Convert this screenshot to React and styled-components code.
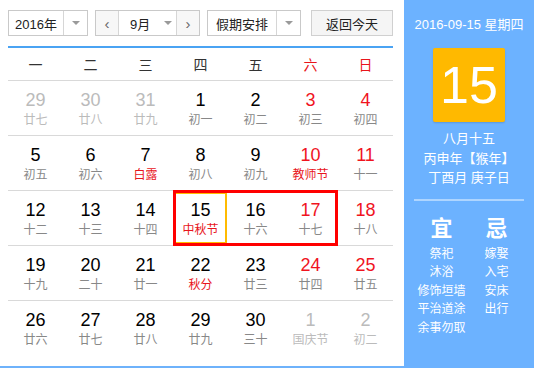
import React from "react";
import styled, { createGlobalStyle } from "styled-components";

const GlobalStyle = createGlobalStyle`
  body {
    margin: 0;
    background: #fff;
    font-family: "Liberation Sans", "Noto Sans CJK SC", sans-serif;
  }
`;

const Widget = styled.div`
  display: flex;
  width: 534px;
  height: 368px;
`;

const Main = styled.div`
  width: 404px;
  box-sizing: border-box;
  padding: 10px 11px 0 8px;
  border-bottom: 2px solid #6eb2fb;
`;

const Toolbar = styled.div`
  display: flex;
  height: 26px;
  gap: 7px;
`;

const Select = styled.div`
  display: flex;
  width: ${(p) => p.$w}px;
  box-sizing: border-box;
  border: 1px solid #c9c9c9;
  background: #fff;
  font-size: 13px;
  color: #222;
`;

const SelectText = styled.div`
  flex: 1;
  display: flex;
  align-items: center;
  justify-content: center;
`;

const ArrowBox = styled.div`
  width: 23px;
  border-left: 1px solid #d6d6d6;
  display: flex;
  align-items: center;
  justify-content: center;
`;

const CaretSvg = styled.svg`
  flex-shrink: 0;
  width: 8px;
  height: 4px;
`;

const Caret = () => (
  <CaretSvg viewBox="0 0 8 4">
    <path d="M0 0h8L4 4z" fill="#9a9a9a" />
  </CaretSvg>
);

const NavBtn = styled.div`
  flex: 0 0 22px;
  display: flex;
  align-items: center;
  justify-content: center;
  background: #f7f7f7;
  color: #666;
  font-size: 15px;
  border-left: ${(p) => (p.$side === "right" ? "1px solid #d6d6d6" : "none")};
  border-right: ${(p) => (p.$side === "left" ? "1px solid #d6d6d6" : "none")};
`;

const MonthText = styled.div`
  flex: 1;
  display: flex;
  align-items: center;
  gap: 14px;
  padding-left: 11px;
`;

const TodayBtn = styled.div`
  margin-left: 3px;
  width: 82px;
  box-sizing: border-box;
  border: 1px solid #d0d0d0;
  background: #f5f5f5;
  display: flex;
  align-items: center;
  justify-content: center;
  font-size: 13px;
  color: #222;
`;

const BlueRule = styled.div`
  margin-top: 10px;
  height: 2px;
  background: #4aa3f3;
`;

const WeekHead = styled.div`
  display: grid;
  grid-template-columns: repeat(7, 55px);
  height: 32px;
  border-bottom: 1px solid #d9d9d9;
`;

const WeekDay = styled.div`
  display: flex;
  align-items: center;
  justify-content: center;
  font-size: 14px;
  color: ${(p) => (p.$red ? "#e8151b" : "#333")};
`;

const Grid = styled.div`
  position: relative;
  display: grid;
  grid-template-columns: repeat(7, 55px);
`;

const Cell = styled.div`
  position: relative;
  height: 45px;
  padding-top: 9px;
  border-bottom: 1px solid ${(p) => (p.$last ? "transparent" : "#d9d9d9")};
  display: flex;
  flex-direction: column;
  align-items: center;
`;

const Num = styled.div`
  font-size: 18px;
  line-height: 20px;
  color: ${(p) => (p.$dim ? "#bbb" : p.$red ? "#f0141e" : "#000")};
`;

const Lunar = styled.div`
  margin-top: 1px;
  font-size: 12px;
  line-height: 18px;
  color: ${(p) => (p.$dim ? "#bbb" : p.$red ? "#e8151b" : "#888")};
`;

const Today = styled.div`
  position: absolute;
  top: 1px;
  left: 1px;
  right: 1px;
  bottom: 1px;
  border: 2px solid #ffbb00;
`;

const Highlight = styled.div`
  position: absolute;
  left: 165px;
  top: 109px;
  width: 165px;
  height: 56px;
  box-sizing: border-box;
  border: 3px solid #f00;
  pointer-events: none;
`;

const Side = styled.div`
  width: 130px;
  height: 368px;
  background: #6cb2ff;
  color: #fff;
  display: flex;
  flex-direction: column;
  align-items: center;
`;

const DateLine = styled.div`
  margin-top: 17px;
  font-size: 13px;
  line-height: 16px;
`;

const DayBox = styled.div`
  margin-top: 15px;
  width: 72px;
  height: 74px;
  background: #ffb900;
  border-radius: 2px;
  box-shadow: 0 1px 2px rgba(0, 0, 0, 0.15);
  display: flex;
  align-items: center;
  justify-content: center;
  font-size: 52px;
`;

const LunarInfo = styled.div`
  margin-top: 7px;
  font-size: 13px;
  line-height: 19.5px;
  text-align: center;
`;

const SideRule = styled.div`
  margin-top: 11px;
  width: 110px;
  height: 2px;
  background: rgba(255, 255, 255, 0.45);
`;

const Almanac = styled.div`
  margin-top: 15px;
  display: grid;
  grid-template-columns: 55px 55px;
  text-align: center;
`;

const Title = styled.div`
  font-size: 22px;
  font-weight: bold;
  line-height: 26px;
  margin-bottom: 3px;
`;

const Item = styled.div`
  font-size: 12px;
  line-height: 18.5px;
  white-space: nowrap;
`;

const weeks = ["一", "二", "三", "四", "五", "六", "日"];

// [day, lunar, flags]  d = other month, h = holiday text, t = today
const days = [
  [29, "廿七", "d"], [30, "廿八", "d"], [31, "廿九", "d"], [1, "初一"], [2, "初二"], [3, "初三"], [4, "初四"],
  [5, "初五"], [6, "初六"], [7, "白露", "h"], [8, "初八"], [9, "初九"], [10, "教师节", "h"], [11, "十一"],
  [12, "十二"], [13, "十三"], [14, "十四"], [15, "中秋节", "ht"], [16, "十六"], [17, "十七"], [18, "十八"],
  [19, "十九"], [20, "二十"], [21, "廿一"], [22, "秋分", "h"], [23, "廿三"], [24, "廿四"], [25, "廿五"],
  [26, "廿六"], [27, "廿七"], [28, "廿八"], [29, "廿九"], [30, "三十"], [1, "国庆节", "d"], [2, "初二", "d"],
];

const yi = ["祭祀", "沐浴", "修饰垣墙", "平治道涂", "余事勿取"];
const ji = ["嫁娶", "入宅", "安床", "出行"];

const App = () => {
  return (
    <>
      <GlobalStyle />
      <Widget>
        <Main>
          <Toolbar>
            <Select $w={80}>
              <SelectText>2016年</SelectText>
              <ArrowBox>
                <Caret />
              </ArrowBox>
            </Select>
            <Select $w={105}>
              <NavBtn $side="left">&lsaquo;</NavBtn>
              <MonthText>
                <span>9月</span>
                <Caret />
              </MonthText>
              <NavBtn $side="right">&rsaquo;</NavBtn>
            </Select>
            <Select $w={94}>
              <SelectText>假期安排</SelectText>
              <ArrowBox>
                <Caret />
              </ArrowBox>
            </Select>
            <TodayBtn>返回今天</TodayBtn>
          </Toolbar>
          <BlueRule />
          <WeekHead>
            {weeks.map((w, i) => (
              <WeekDay key={w} $red={i >= 5}>
                {w}
              </WeekDay>
            ))}
          </WeekHead>
          <Grid>
            {days.map(([n, l, f = ""], i) => {
              const dim = f.includes("d");
              const weekend = i % 7 >= 5;
              return (
                <Cell key={i} $last={i >= 28}>
                  {f.includes("t") && <Today />}
                  <Num $dim={dim} $red={weekend}>
                    {n}
                  </Num>
                  <Lunar $dim={dim} $red={f.includes("h") && !dim}>
                    {l}
                  </Lunar>
                </Cell>
              );
            })}
            <Highlight />
          </Grid>
        </Main>
        <Side>
          <DateLine>2016-09-15 星期四</DateLine>
          <DayBox>15</DayBox>
          <LunarInfo>
            <div>八月十五</div>
            <div>丙申年【猴年】</div>
            <div>丁酉月 庚子日</div>
          </LunarInfo>
          <SideRule />
          <Almanac>
            <div>
              <Title>宜</Title>
              {yi.map((t) => (
                <Item key={t}>{t}</Item>
              ))}
            </div>
            <div>
              <Title>忌</Title>
              {ji.map((t) => (
                <Item key={t}>{t}</Item>
              ))}
            </div>
          </Almanac>
        </Side>
      </Widget>
    </>
  );
};

export default App;
